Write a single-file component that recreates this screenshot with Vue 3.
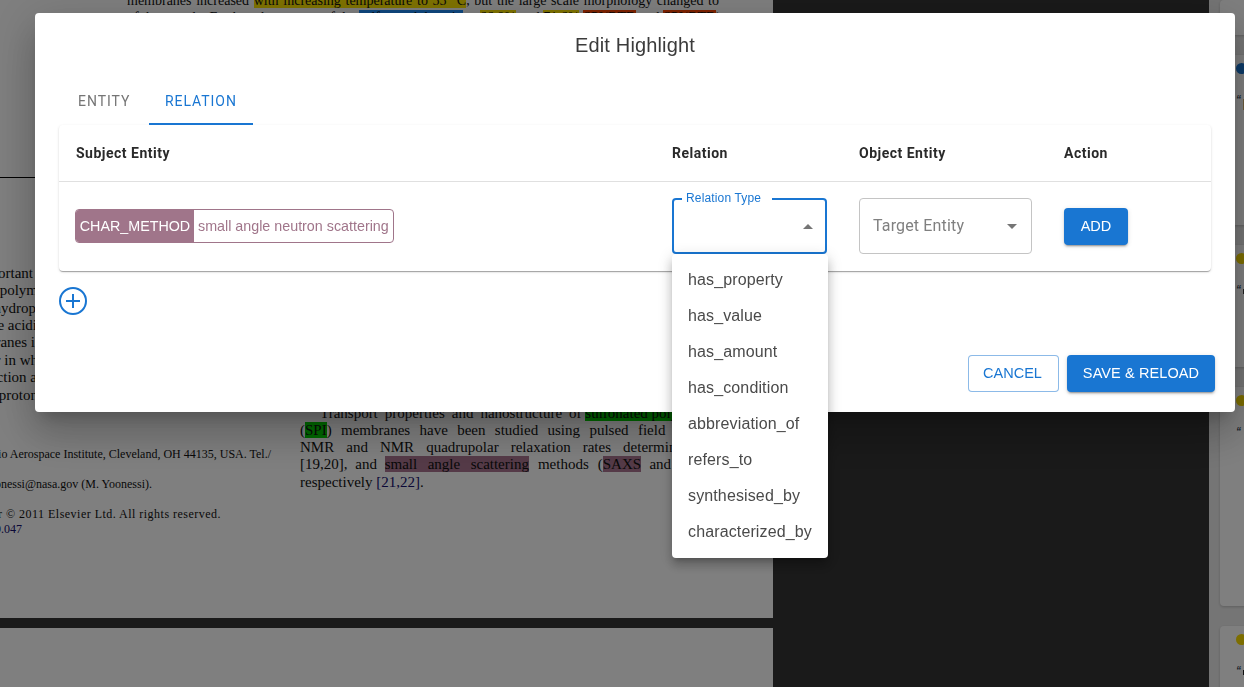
<template>
  <div class="desk">
    <div class="pdf">
      <div class="sheet first">
        <div
          v-for="(l, i) in lines"
          :key="i"
          class="line"
          :class="l.cls"
          :style="{ left: l.x + 'px', top: l.y + 'px', width: l.w + 'px' }"
        >
          <span
            v-for="(p, j) in l.parts"
            :key="j"
            :class="p.c"
            :style="p.ws ? { wordSpacing: p.ws + 'px' } : null"
            >{{ p.t }}</span
          >
        </div>
        <div class="rule"></div>
      </div>
      <div class="sheet second"></div>
    </div>
    <div class="gutter"></div>
    <aside class="side">
      <div v-for="(c, i) in cards" :key="i" class="note" :style="{ height: c.h + 'px' }">
        <span v-if="c.dot" class="dot" :class="c.dot"></span>
        <span v-if="c.dot" class="quote">“</span>
        <span v-if="c.mark" class="mark" :style="{ background: c.mark, height: c.mh + 'px' }"></span>
      </div>
    </aside>
  </div>

  <div class="overlay">
    <div class="modal">
      <h2 class="title">Edit Highlight</h2>
      <div class="tabs">
        <div class="tab">ENTITY</div>
        <div class="tab active">RELATION</div>
      </div>
      <div class="paper">
        <div class="grid head">
          <div>Subject Entity</div>
          <div>Relation</div>
          <div>Object Entity</div>
          <div>Action</div>
          <div></div>
        </div>
        <div class="grid body">
          <div>
            <div class="chip">
              <span class="chip-type">CHAR_METHOD</span>
              <span class="chip-text">small angle neutron scattering</span>
            </div>
          </div>
          <div class="select focused">
            <span class="float-label">Relation Type</span>
            <span class="arrow up"></span>
            <ul class="menu">
              <li v-for="r in relations" :key="r">{{ r }}</li>
            </ul>
          </div>
          <div class="select target">
            <span class="placeholder">Target Entity</span>
            <span class="arrow"></span>
          </div>
          <div><button class="btn solid add">ADD</button></div>
          <div></div>
        </div>
      </div>
      <div class="plus-row">
        <svg width="28" height="28" viewBox="0 0 28 28" fill="none" stroke="#1976d2" stroke-width="2">
          <circle cx="14" cy="14" r="13" />
          <path d="M14 7v14M7 14h14" />
        </svg>
      </div>
      <div class="actions">
        <button class="btn outline">CANCEL</button>
        <button class="btn solid">SAVE &amp; RELOAD</button>
      </div>
    </div>
  </div>
</template>

<script setup>
const relations = [
  "has_property",
  "has_value",
  "has_amount",
  "has_condition",
  "abbreviation_of",
  "refers_to",
  "synthesised_by",
  "characterized_by",
];

const cards = [
  { h: 35 },
  { h: 170, dot: "blue", mark: "#d8b878", mh: 11 },
  { h: 122, dot: "yellow", mark: "#444", mh: 5 },
  { h: 219, dot: "yellow" },
  { h: 80, dot: "yellow", mark: "#222", mh: 5 },
];

const lines = [
  {
    x: 127, y: -8, w: 592, cls: "just top",
    parts: [
      { t: "membranes increased " },
      { t: "with increasing temperature to 55 °C", c: "hl-y" },
      { t: ", but the large scale morphology changed to" },
    ],
  },
  {
    x: 127, y: 9, w: 620, cls: "top",
    parts: [
      { t: "of the sample. Further, the amount of the " },
      { t: "sulfonated domain", c: "hl-b" },
      { t: " at " },
      { t: "66.8%", c: "hl-y" },
      { t: " and " },
      { t: "71.6%", c: "hl-y" },
      { t: " " },
      { t: "SPI(BTD", c: "hl-r" },
      { t: " and " },
      { t: "SPI(BTD", c: "hl-r" },
      { t: ")" },
    ],
  },
  { x: -60, y: 265, w: 93, cls: "right", parts: [{ t: "important" }] },
  { x: -60, y: 282, w: 98, cls: "right", parts: [{ t: "of polym" }] },
  { x: -60, y: 300, w: 96, cls: "right", parts: [{ t: "hydrop" }] },
  { x: -60, y: 317, w: 97, cls: "right", parts: [{ t: "the acidi" }] },
  { x: -60, y: 334, w: 95, cls: "right", parts: [{ t: "membranes i" }] },
  { x: -60, y: 352, w: 98, cls: "right", parts: [{ t: "or in wh" }] },
  { x: -60, y: 369, w: 97, cls: "right", parts: [{ t: "junction a" }] },
  { x: -60, y: 387, w: 98, cls: "right", parts: [{ t: "of proton" }] },
  {
    x: 320, y: 405, w: 400,
    parts: [
      { t: "Transport properties and nanostructure of", ws: 3.25 },
      { t: " " },
      { t: "sulfonated poly", c: "hl-g" },
    ],
  },
  {
    x: 300, y: 422, w: 420,
    parts: [
      { t: "(" },
      { t: "SPI", c: "hl-g" },
      { t: ") membranes have been studied using pulsed field g", ws: 5.6 },
    ],
  },
  {
    x: 300, y: 439, w: 420,
    parts: [{ t: "NMR and NMR quadrupolar relaxation rates determined", ws: 8.3 }],
  },
  {
    x: 300, y: 456, w: 420,
    parts: [
      { t: "[19,20], and ", ws: 4 },
      { t: "small angle scattering", c: "hl-m", ws: 6.75 },
      { t: " methods (", ws: 5.25 },
      { t: "SAXS", c: "hl-m" },
      { t: " and", ws: 4.5 },
    ],
  },
  {
    x: 300, y: 474, w: 420,
    parts: [{ t: "respectively " }, { t: "[21,22]", c: "cite" }, { t: "." }],
  },
  { x: -100, y: 447, w: 371, cls: "right small", parts: [{ t: "Ohio Aerospace Institute, Cleveland, OH 44135, USA. Tel./" }] },
  { x: -100, y: 477, w: 252, cls: "right small", parts: [{ t: "myoonessi@nasa.gov (M. Yoonessi)." }] },
  { x: -100, y: 507, w: 321, cls: "right small loose", parts: [{ t: "matter © 2011 Elsevier Ltd. All rights reserved." }] },
  { x: -100, y: 522, w: 122, cls: "right small cite", parts: [{ t: "09.047" }] },
];
</script>

<style>
html,
body {
  margin: 0;
  overflow: hidden;
}
</style>

<style scoped>
.desk {
  display: flex;
  height: 687px;
  overflow: hidden;
  background: #343434;
}
.pdf {
  width: 773px;
  flex: none;
  display: flex;
  flex-direction: column;
  gap: 10px;
  overflow: hidden;
}
.sheet {
  background: #fff;
}
.first {
  height: 618px;
  position: relative;
  overflow: hidden;
}
.second {
  flex: 1;
}
.line {
  position: absolute;
  white-space: nowrap;
  font-family: "Liberation Serif", serif;
  font-size: 15px;
  line-height: 17px;
  color: #111;
}
.just {
  white-space: normal;
  text-align: justify;
  text-align-last: justify;
  height: 17px;
  overflow: hidden;
}
.top {
  font-size: 14px;
}
.right {
  text-align: right;
}
.small {
  font-size: 12px;
  line-height: 15px;
}
.loose {
  letter-spacing: 0.48px;
}
.cite {
  color: #16106e;
}
.hl-y {
  background: #ffe600;
}
.hl-b {
  background: #1e90ff;
}
.hl-r {
  background: #ff4500;
}
.hl-g {
  background: #00d400;
}
.hl-m {
  background: #aa7590;
}
.rule {
  position: absolute;
  left: 0;
  top: 177px;
  width: 120px;
  height: 1px;
  background: #000;
}
.gutter {
  flex: 1;
}
.side {
  width: 35px;
  flex: none;
  padding-left: 11px;
  box-sizing: border-box;
  display: flex;
  flex-direction: column;
  gap: 20px;
  background: #ebebeb;
  overflow: hidden;
}
.note {
  flex: none;
  width: 100px;
  position: relative;
  border-radius: 4px;
  background: #fff;
  box-shadow: 0 1px 3px rgba(0, 0, 0, 0.2);
}
.dot {
  position: absolute;
  left: 16px;
  top: 8px;
  width: 11px;
  height: 11px;
  border-radius: 50%;
}
.dot.blue {
  background: #1976d2;
}
.dot.yellow {
  background: #fbdc00;
}
.quote {
  position: absolute;
  left: 16px;
  top: 40px;
  font: italic 700 10px/10px "Liberation Sans", sans-serif;
  color: #345;
}
.mark {
  position: absolute;
  left: 23px;
  top: 44px;
  width: 3px;
}

.overlay {
  position: fixed;
  inset: 0;
  background: rgba(0, 0, 0, 0.5);
  padding: 13px 0 0 35px;
  box-sizing: border-box;
}
.modal {
  width: 1200px;
  height: 399px;
  background: #fff;
  border-radius: 4px;
  box-sizing: border-box;
  padding: 0 24px 0;
  box-shadow: 0 11px 15px -7px rgba(0, 0, 0, 0.2), 0 24px 38px 3px rgba(0, 0, 0, 0.14),
    0 9px 46px 8px rgba(0, 0, 0, 0.12);
  font-family: "Liberation Sans", Arial, sans-serif;
  color: #333;
}
.title {
  margin: 0;
  height: 64px;
  font-size: 20px;
  font-weight: 400;
  letter-spacing: 0.15px;
  line-height: 64px;
  text-align: center;
  color: #3b3b3b;
}
.tabs {
  display: flex;
  height: 48px;
}
.tab {
  width: 90px;
  box-sizing: border-box;
  padding-left: 19px;
  line-height: 48px;
  font-family: Roboto, sans-serif;
  font-size: 14px;
  letter-spacing: 0.95px;
  color: #757575;
}
.tab.active {
  width: 104px;
  color: #1976d2;
  border-bottom: 2px solid #1976d2;
  height: 48px;
  padding-left: 16px;
}
.paper {
  background: #fff;
  border-radius: 4px;
  height: 146px;
  box-sizing: border-box;
  box-shadow: 0 2px 1px -1px rgba(0, 0, 0, 0.2), 0 1px 1px rgba(0, 0, 0, 0.14),
    0 1px 3px rgba(0, 0, 0, 0.12);
}
.grid {
  display: grid;
  grid-template-columns: 597px 187px 205px 1fr 0;
  align-items: center;
}
.grid > div {
  padding-left: 16px;
  box-sizing: border-box;
}
.grid > div:last-child {
  padding: 0;
}
.head {
  height: 57px;
  border-bottom: 1px solid #e0e0e0;
  box-sizing: border-box;
  font-family: Roboto, sans-serif;
  font-weight: 700;
  font-size: 14px;
  letter-spacing: 0.5px;
  color: #2a2a2a;
}
.head > div:first-child {
  padding-left: 17px;
}
.body {
  height: 89px;
}
.chip {
  display: flex;
  height: 34px;
  width: 319px;
  margin-top: -1px;
  box-sizing: border-box;
  border: 1px solid #a0758a;
  border-radius: 4px;
  overflow: hidden;
  font-size: 14.3px;
  line-height: 32px;
  white-space: nowrap;
}
.chip-type {
  background: #a0758a;
  color: #fff;
  width: 118px;
  flex: none;
  text-align: center;
}
.chip-text {
  color: #a0758a;
  padding-left: 4px;
}
.grid > .select {
  position: relative;
  margin-left: 16px;
  padding-left: 0;
  height: 56px;
  border-radius: 4px;
  margin-top: -1px;
}
.focused {
  width: 155px;
  border: 2px solid #1976d2;
}
.float-label {
  position: absolute;
  left: 8px;
  top: -9px;
  padding: 0 11px 0 4px;
  background: #fff;
  font-size: 12px;
  letter-spacing: 0.15px;
  line-height: 15px;
  color: #1976d2;
}
.target {
  width: 173px;
  border: 1px solid #c4c4c4;
  display: flex;
  align-items: center;
}
.placeholder {
  padding: 0 0 2px 13px;
  font-family: Roboto, sans-serif;
  font-size: 16px;
  color: #808080;
  letter-spacing: 0.15px;
}
.arrow {
  position: absolute;
  right: 14px;
  top: 25px;
  border-left: 5px solid transparent;
  border-right: 5px solid transparent;
  border-top: 5px solid #757575;
}
.arrow.up {
  right: 12px;
  top: 24px;
  border-top: 0;
  border-bottom: 5px solid #757575;
}
.menu {
  position: absolute;
  z-index: 2;
  left: -2px;
  top: 54px;
  width: 156px;
  margin: 0;
  padding: 8px 0;
  list-style: none;
  background: #fff;
  border-radius: 4px;
  box-shadow: 0 5px 5px -3px rgba(0, 0, 0, 0.2), 0 8px 10px 1px rgba(0, 0, 0, 0.14),
    0 3px 14px 2px rgba(0, 0, 0, 0.12);
}
.menu li {
  height: 36px;
  line-height: 35px;
  padding-left: 16px;
  font-size: 16px;
  letter-spacing: 0.13px;
  color: #4a4a4a;
  white-space: nowrap;
}
.btn {
  height: 37px;
  padding: 0 16px;
  box-sizing: border-box;
  border-radius: 4px;
  border: 0;
  font-family: "Liberation Sans", Arial, sans-serif;
  font-size: 14.5px;
  line-height: 37px;
}
.solid {
  background: #1976d2;
  color: #fff;
  box-shadow: 0 3px 1px -2px rgba(0, 0, 0, 0.2), 0 2px 2px rgba(0, 0, 0, 0.14),
    0 1px 5px rgba(0, 0, 0, 0.12);
}
.outline {
  background: #fff;
  color: #1976d2;
  border: 1px solid rgba(25, 118, 210, 0.5);
  line-height: 35px;
  width: 91px;
  padding: 0 2px 0 0;
}
.add {
  width: 64px;
  padding: 0;
  display: block;
}
.plus-row {
  display: flex;
  height: 28px;
  margin-top: 16px;
}
.actions {
  display: flex;
  justify-content: flex-end;
  gap: 8px;
  margin-top: 40px;
}
.actions .solid {
  width: 148px;
  padding: 0;
  letter-spacing: 0.1px;
  margin-right: -4px;
}
</style>
